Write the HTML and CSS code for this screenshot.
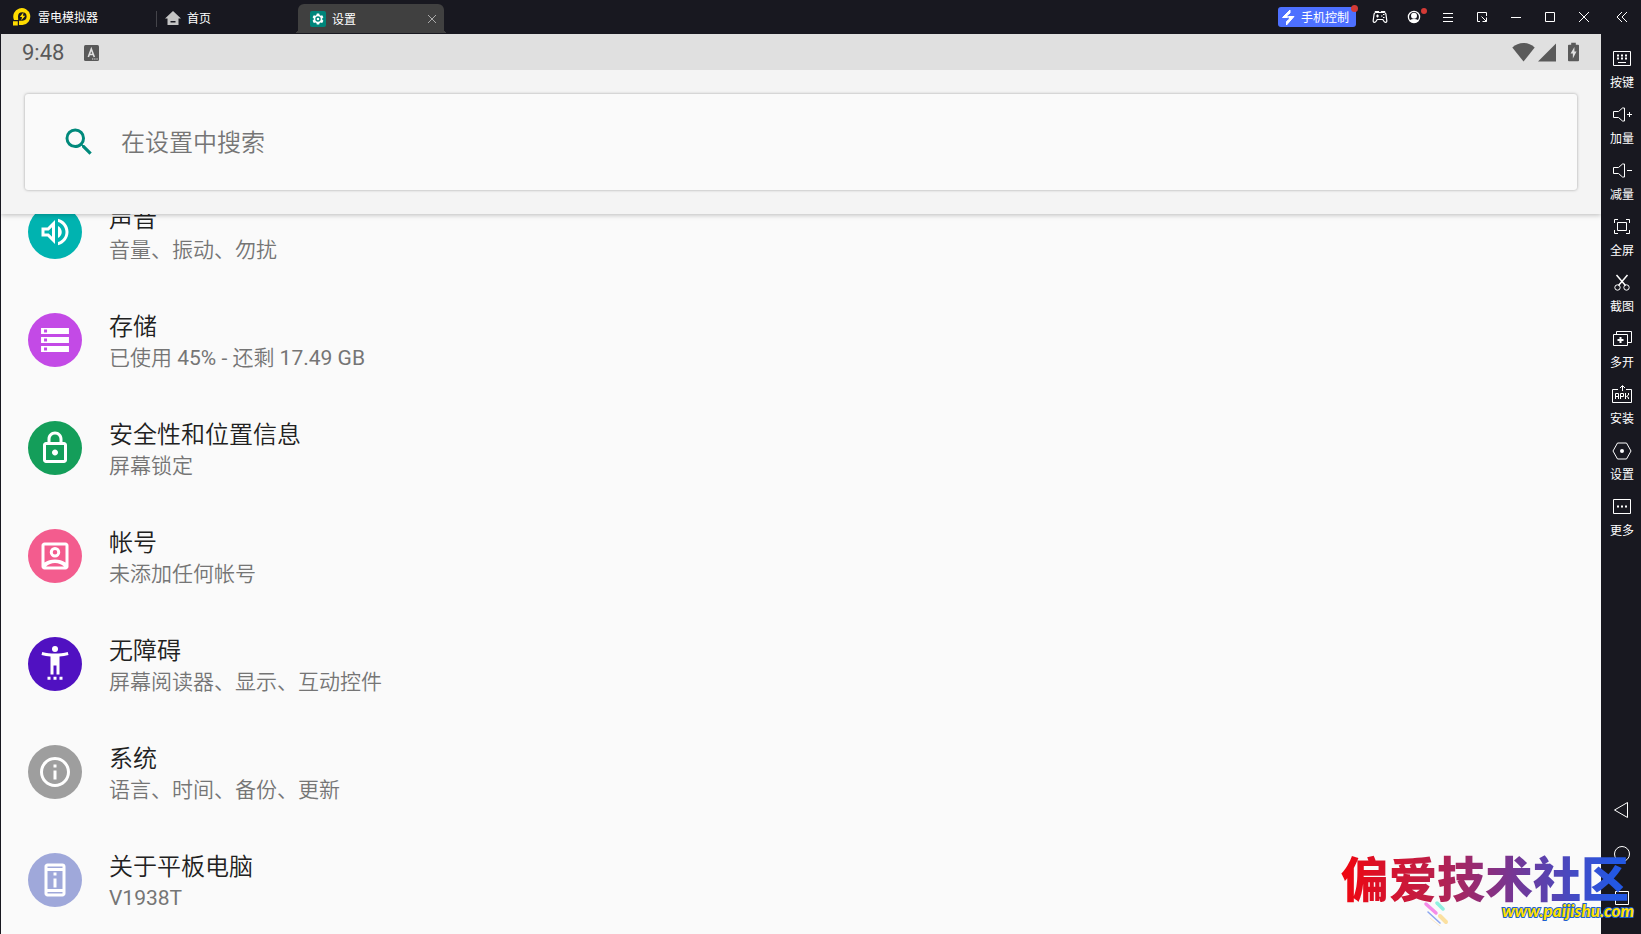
FILE: index.html
```html
<!DOCTYPE html>
<html lang="zh-CN">
<head>
<meta charset="utf-8">
<title>雷电模拟器</title>
<link rel="stylesheet" href="styles.css">
</head>
<body>
<header class="titlebar">
  <div class="brand">
    <svg class="logo" viewBox="0 0 18 18"><path d="M0 17.500V13.200H4.800V17.500ZM1 12A8.500 8.500 0 1 1 9.500 17H6V12.800H9.500A4.300 4.300 0 1 0 5 8.500L5.200 12Z" fill="#ffdc00"/><path d="M10.500 4.300 6.800 9H9l-.8 3.500L12.300 7.800H10z" fill="#ffdc00"/></svg>
    <span>雷电模拟器</span>
  </div>
  <nav class="tabs">
    <a class="tab" href="#home">
      <svg class="home-icon" viewBox="0 0 16 16"><path d="M8 1 0 8.500h2.500V15h11V8.500H16z" fill="#c4c4c4"/><path d="M5.500 11h5v1.500h-5z" fill="#181820"/></svg>
      <span>首页</span>
    </a>
    <div class="tab tab-active">
      <svg class="tab-icon" viewBox="0 0 16 16"><rect width="16" height="16" rx="2" fill="#00857a"/><path d="M6.800 2.500h2.400l.4 1.600 1 .6 1.600-.5 1.200 2.100-1.200 1.200v1.100l1.200 1.200-1.200 2.100-1.600-.5-1 .6-.4 1.600H6.800l-.4-1.600-1-.6-1.600.5-1.200-2.100 1.200-1.200V7.500L2.600 6.300l1.200-2.100 1.600.5 1-.6z" fill="#fff"/><circle cx="8" cy="8" r="2" fill="none" stroke="#00857a" stroke-width="1.400"/></svg>
      <span>设置</span>
      <button class="tab-close" aria-label="关闭标签"><svg viewBox="0 0 10 10"><path d="m1 1 8 8M9 1 1 9" stroke="#aaa" fill="none"/></svg></button>
    </div>
  </nav>
  <div class="window-actions">
    <button class="phone-btn"><svg viewBox="0 0 14 18"><path d="M9 2 1.500 9.500H6.500L6 7.500 9 5zM5.500 17 13 8.500H7.500L8.500 11 5.500 13.500z" fill="#fff" stroke="#fff" stroke-linejoin="round"/></svg><span>手机控制</span><i class="dot"></i></button>
    <button class="icon-btn" aria-label="手柄"><svg viewBox="0 0 24 24"><path d="M8 7.500h8q1.500 0 1.900 1.500l.9 6.500q.2 2-1.300 1.800-1 0-1.800-1.300l-.9-1.500H9.200L8.300 16q-.8 1.300-1.800 1.300-1.500.2-1.300-1.800L6.100 9Q6.500 7.500 8 7.500zM9.500 9.500v3M8 11h3M13 11h1.500M15 9.500h1.500M15 12.500h1.500M8 7.500 7.500 6.500h3L11 7.500M13 7.500l.5-1h3l-.5 1" fill="none" stroke="#fff" stroke-width="1.200"/></svg></button>
    <button class="icon-btn" aria-label="用户"><svg viewBox="0 0 24 24"><circle cx="12" cy="12" r="5.600" fill="none" stroke="#fff" stroke-width="1.300"/><circle cx="12" cy="10.800" r="3" fill="#fff"/><path d="M7.500 15.200q4.500-2.600 9 0-1.800 2.800-4.500 2.800t-4.500-2.800z" fill="#fff"/></svg><i class="dot"></i></button>
    <button class="icon-btn" aria-label="菜单"><svg viewBox="0 0 24 24"><path d="M7 8.500h10M7 12.500h10M7 16.500h10" stroke="#fff"/></svg></button>
    <button class="icon-btn" aria-label="缩放"><svg viewBox="0 0 24 24"><path d="M10 16.500H7.500v-9h9V11M11.500 11.500l5 5M16.500 12.500v4h-4" fill="none" stroke="#fff"/></svg></button>
    <button class="icon-btn" aria-label="最小化"><svg viewBox="0 0 24 24"><path d="M7 12.500h10" stroke="#fff"/></svg></button>
    <button class="icon-btn" aria-label="最大化"><svg viewBox="0 0 24 24"><path d="M7.500 7.500h9v9h-9z" fill="none" stroke="#fff"/></svg></button>
    <button class="icon-btn" aria-label="关闭"><svg viewBox="0 0 24 24"><path d="m7 7 10 10M17 7 7 17" stroke="#fff"/></svg></button>
    <button class="icon-btn collapse" aria-label="收起"><svg viewBox="0 0 24 24"><path d="m12 7-5 5 5 5M17 7l-5 5 5 5" fill="none" stroke="#fff"/></svg></button>
  </div>
</header>

<div class="body">
  <main class="screen">
    <div class="statusbar">
      <span class="clock">9:48</span>
      <svg class="ime" viewBox="0 0 15 16"><rect width="15" height="16" rx="1.500" fill="#595959"/><path d="m4.300 12 3-8 3 8M5.300 9.500h4" fill="none" stroke="#e0e0e0" stroke-width="1.600"/><path d="M8 14h1.300M10.200 14h1.300M12.400 14h1.300" stroke="#e0e0e0" stroke-width="1.200"/></svg>
      <div class="signals">
        <svg class="wifi" viewBox="0 0 23 20"><path d="M.3 5.500C3.500 2.500 7.300 1 11.500 1s8 1.500 11.200 4.500L11.500 19.500z" fill="#5a5a5a"/></svg>
        <svg class="cell" viewBox="0 0 18 20"><path d="M18 1.500v18H0z" fill="#5a5a5a"/></svg>
        <svg class="battery" viewBox="0 0 12 20"><path d="M3.500 0h5v2H11q1 0 1 1v16q0 1-1 1H1q-1 0-1-1V3q0-1 1-1h2.500z" fill="#5a5a5a"/><path d="M7 4.500 2.800 11.500h2.500V17l4-7.500H7z" fill="#e0e0e0"/></svg>
      </div>
    </div>
    <div class="search-area">
      <form class="search-card">
        <svg viewBox="0 0 24 24"><path d="M15.500 14h-.79l-.28-.27A6.470 6.470 0 0 0 16 9.500 6.500 6.500 0 1 0 9.500 16c1.610 0 3.090-.59 4.230-1.570l.27.28v.79l5 4.990L20.490 19l-4.990-5zm-6 0C7.010 14 5 11.990 5 9.500S7.010 5 9.500 5 14 7.010 14 9.500 11.990 14 9.500 14z" fill="#00897b"/></svg>
        <input type="search" placeholder="在设置中搜索" aria-label="在设置中搜索">
      </form>
    </div>
    <div class="list">
      <a class="row" href="#sound">
        <span class="badge teal"><svg viewBox="0 0 24 24"><path d="M3 9v6h4l5 5V4L7 9H3zm7-.17v6.340L7.830 13H5v-2h2.830L10 8.830zM16.500 12c0-1.770-1.020-3.290-2.500-4.030v8.050c1.480-.73 2.500-2.250 2.500-4.020zM14 3.230v2.060c2.890.86 5 3.540 5 6.710s-2.110 5.850-5 6.710v2.060c4.010-.91 7-4.490 7-8.770s-2.990-7.860-7-8.770z"/></svg></span>
        <span class="text"><span class="name">声音</span><span class="desc">音量、振动、勿扰</span></span>
      </a>
      <a class="row" href="#storage">
        <span class="badge purple"><svg viewBox="0 0 24 24"><path fill-rule="evenodd" d="M2.700 4h18.600v4H2.700zM4.700 5v2h2V5zM2.700 10h18.600v4H2.700zM4.700 11v2h2v-2zM2.700 16h18.600v4H2.700zM4.700 17v2h2v-2z"/></svg></span>
        <span class="text"><span class="name">存储</span><span class="desc">已使用 45% - 还剩 17.49 GB</span></span>
      </a>
      <a class="row" href="#security">
        <span class="badge green"><svg viewBox="0 0 24 24"><path d="M18 8h-1V6c0-2.760-2.240-5-5-5S7 3.240 7 6v2H6c-1.100 0-2 .9-2 2v10c0 1.100.9 2 2 2h12c1.100 0 2-.9 2-2V10c0-1.100-.9-2-2-2zM9 6c0-1.660 1.340-3 3-3s3 1.340 3 3v2H9V6zm9 14H6V10h12v10zm-6-3c1.100 0 2-.9 2-2s-.9-2-2-2-2 .9-2 2 .9 2 2 2z"/></svg></span>
        <span class="text"><span class="name">安全性和位置信息</span><span class="desc">屏幕锁定</span></span>
      </a>
      <a class="row" href="#accounts">
        <span class="badge pink"><svg viewBox="0 0 24 24"><path fill-rule="evenodd" d="M5 3h14c1.100 0 2 .9 2 2v14c0 1.100-.9 2-2 2H5c-1.100 0-2-.9-2-2V5c0-1.100.9-2 2-2zm0 2v11.300c2-1.200 4.300-1.900 7-1.900s5 .7 7 1.900V5zm1 14h12c-1.700-1.500-3.600-2.400-6-2.400S7.700 17.500 6 19zM12 6a3.500 3.500 0 1 1 0 7 3.500 3.500 0 0 1 0-7zm0 2a1.500 1.500 0 1 0 0 3 1.500 1.500 0 0 0 0-3z"/></svg></span>
        <span class="text"><span class="name">帐号</span><span class="desc">未添加任何帐号</span></span>
      </a>
      <a class="row" href="#accessibility">
        <span class="badge indigo"><svg viewBox="0 0 24 24"><circle cx="12" cy="2" r="2"/><path d="M20.500 4C17.900 4.700 14.800 5 12 5s-5.900-.3-8.500-1L3 6c1.900.5 4 .8 6 1v12h2v-6h2v6h2V7c2-.2 4.100-.5 6-1zM7 20.500h2v2H7zM11 20.500h2v2h-2zM15 20.500h2v2h-2z"/></svg></span>
        <span class="text"><span class="name">无障碍</span><span class="desc">屏幕阅读器、显示、互动控件</span></span>
      </a>
      <a class="row" href="#system">
        <span class="badge gray"><svg viewBox="0 0 24 24"><path d="M11 7h2v2h-2zm0 4h2v6h-2zm1-9C6.480 2 2 6.480 2 12s4.480 10 10 10 10-4.480 10-10S17.520 2 12 2zm0 18c-4.410 0-8-3.590-8-8s3.590-8 8-8 8 3.590 8 8-3.590 8-8 8z"/></svg></span>
        <span class="text"><span class="name">系统</span><span class="desc">语言、时间、备份、更新</span></span>
      </a>
      <a class="row" href="#about">
        <span class="badge lavender"><svg viewBox="0 0 24 24"><path d="M13 7h-2v2h2V7zm0 4h-2v6h2v-6zm4-9.990L7 1c-1.100 0-2 .9-2 2v18c0 1.100.9 2 2 2h10c1.100 0 2-.9 2-2V3c0-1.100-.9-1.990-2-1.990zM17 21H7v-1h10v1zm0-3H7V6h10v12zm0-14H7V3h10v1z"/></svg></span>
        <span class="text"><span class="name">关于平板电脑</span><span class="desc">V1938T</span></span>
      </a>
    </div>
  </main>

  <aside class="sidebar">
    <div class="tools">
      <button class="tool"><svg viewBox="0 0 24 24"><path d="M3.500 4.500h17v14h-17zM8 15.500h8"/><path d="M7 8.500h2m2 0h2m2 0h2M7 11.500h2m2 0h2m2 0h2" stroke-width="2"/></svg><span>按键</span></button>
      <button class="tool"><svg viewBox="0 0 24 24"><path d="M3.500 8.500h5l4-3.500h2v13h-2l-4-3.500h-5zM17 11.500h5M19.500 9v5"/></svg><span>加量</span></button>
      <button class="tool"><svg viewBox="0 0 24 24"><path d="M3.500 8.500h5l4-3.500h2v13h-2l-4-3.500h-5zM17 11.500h5"/></svg><span>减量</span></button>
      <button class="tool"><svg viewBox="0 0 24 24"><path d="M7.500 7.500h9v8h-9zM4.500 8V4.500H8M16 4.500h3.500V8M19.500 15v3.500H16M8 18.500H4.500V15"/></svg><span>全屏</span></button>
      <button class="tool"><svg viewBox="0 0 24 24"><path d="m6.500 4 9 10.500M17.500 4l-9 10.500" stroke-width="1.500"/><circle cx="7.500" cy="16.500" r="2.700"/><circle cx="16.500" cy="16.500" r="2.700"/></svg><span>截图</span></button>
      <button class="tool"><svg viewBox="0 0 24 24"><path d="M3.500 7.500h14v11h-14zM6.500 7V4.500h15v11H18"/><path d="M7.500 13h6M10.500 10v6" stroke-width="2"/></svg><span>多开</span></button>
      <button class="tool"><svg viewBox="0 0 24 24"><path d="M8 6.500H2.500v13h19v-13H16M12.500 8V3M10 5l2.500-2.500L15 5"/><path d="M5.500 16v-5.500h3V16m-3-2.500h3M10.500 16v-5.500h3v3h-3M15.500 10v6M18.500 10v2l-2 1.500 2 1V16"/></svg><span>安装</span></button>
      <button class="tool"><svg viewBox="0 0 24 24"><path d="M7.500 4h9l4.500 8-4.500 8h-9L3 12z"/><circle cx="12" cy="12" r="2" fill="#fff" stroke="none"/></svg><span>设置</span></button>
      <button class="tool"><svg viewBox="0 0 24 24"><path d="M3.500 4.500h17v14h-17z"/><path d="M7 11.500h2m2 0h2m2 0h2" stroke-width="2"/></svg><span>更多</span></button>
    </div>
    <div class="nav">
      <button aria-label="返回"><svg viewBox="0 0 24 24"><path d="M17.500 4.500v15L4.500 12z"/></svg></button>
      <button aria-label="主页"><svg viewBox="0 0 24 24"><circle cx="12" cy="12" r="7.500"/></svg></button>
      <button aria-label="最近任务"><svg viewBox="0 0 24 24"><path d="M5.500 5.500h13v13h-13z"/></svg></button>
    </div>
  </aside>
</div>

<div class="watermark">
  <span class="wm-name">偏爱技术社区</span>
  <svg class="wm-dashes" viewBox="0 0 26 26" fill="none" stroke-linecap="round"><path d="m3 3 10 9" stroke="#f58be8" stroke-width="3.500"/><path d="m14 2 6 6" stroke="#8ef0e0" stroke-width="3.500"/><path d="m17 15 6 6" stroke="#fbe0a0" stroke-width="4"/><path d="m5 11 12 11" stroke="#8ba6f0" stroke-width="1.500"/><path d="m7 17 10 8" stroke="#fbe9c8" stroke-width="1"/></svg>
  <span class="wm-url">www.paijishu.com</span>
</div>
</body>
</html>
```
FILE: styles.css
```css
* { box-sizing: border-box; }

body {
  margin: 0;
  height: 100vh;
  display: flex;
  flex-direction: column;
  overflow: hidden;
  background: #181820;
  color: #fff;
  font: 12px/16px "Noto Sans CJK SC", sans-serif;
}

button {
  padding: 0;
  border: 0;
  background: none;
  color: inherit;
  font: inherit;
}

a { color: inherit; text-decoration: none; }
svg { display: block; flex: none; }

.titlebar {
  flex: none;
  height: 34px;
  display: flex;
  align-items: stretch;
}

.brand {
  width: 156px;
  padding-left: 13px;
  display: flex;
  align-items: center;
  gap: 7px;
}
.logo { width: 18px; height: 18px; }

.tabs { display: flex; }
.tab {
  position: relative;
  display: flex;
  align-items: center;
  width: 142px;
  padding: 2px 0 0 9px;
  gap: 6px;
}
.tab::before {
  content: "";
  position: absolute;
  left: 0;
  top: 11px;
  height: 16px;
  border-left: 1px solid #44444a;
}
.home-icon { width: 16px; height: 16px; }
.tab-active {
  width: 146px;
  margin: 4px 0 1px;
  padding: 0 5px 0 12px;
  background: #404040;
  border-radius: 6px 6px 0 0;
}
/* Flared feet on both sides of the active tab. */
.tab-active::before {
  top: auto;
  bottom: 0;
  left: -4px;
  right: -4px;
  height: 4px;
  border: 0;
  background:
    radial-gradient(circle at 0 0, transparent 4px, #404040 4px) left / 4px 4px no-repeat,
    radial-gradient(circle at 100% 0, transparent 4px, #404040 4px) right / 4px 4px no-repeat;
}
.tab-icon { width: 16px; height: 16px; }
.tab-close { margin-left: auto; padding: 2px; }
.tab-close svg { width: 10px; height: 10px; }

.window-actions {
  margin-left: auto;
  padding-right: 7px;
  display: flex;
  align-items: center;
  gap: 10px;
}
.phone-btn {
  position: relative;
  height: 20px;
  margin-right: 2px;
  padding: 0 7px 0 3px;
  display: flex;
  align-items: center;
  gap: 6px;
  background: #4d70ff;
  border-radius: 3px;
}
.phone-btn svg { width: 14px; height: 18px; }
.icon-btn { position: relative; width: 24px; height: 24px; }
.icon-btn svg { width: 24px; height: 24px; }
.collapse { margin-left: 4px; }
.dot {
  position: absolute;
  top: -2px;
  right: -2px;
  width: 7px;
  height: 7px;
  border-radius: 50%;
  background: #d33a36;
}
.icon-btn .dot { top: 3px; right: -1px; width: 6px; height: 6px; }

.body { flex: 1; min-height: 0; display: flex; }

.screen {
  flex: 1;
  min-width: 0;
  display: flex;
  flex-direction: column;
  overflow: hidden;
  margin-left: 1px;
  background: #fafafa;
  font-family: Roboto, "Noto Sans CJK SC DemiLight", "Noto Sans CJK SC", sans-serif;
}

.statusbar {
  position: relative;
  z-index: 2;
  flex: none;
  height: 36px;
  padding: 2px 22px 0 21px;
  display: flex;
  align-items: center;
  gap: 20px;
  background: #e0e0e0;
  color: #5a5a5a;
}
.clock { font-size: 22px; line-height: 36px; }
.ime { width: 15px; height: 16px; }
.signals { margin: 0 0 2px auto; display: flex; }
.wifi { width: 23px; height: 20px; }
.cell { width: 18px; height: 20px; margin: 0 12px 0 3px; }
.battery { width: 11px; height: 20px; }

.search-area {
  position: relative;
  z-index: 1;
  flex: none;
  padding: 24px;
  background: #f4f4f4;
  box-shadow: 0 1px 5px rgba(0, 0, 0, .25);
}
.search-card {
  height: 96px;
  padding: 0 36px;
  display: flex;
  align-items: center;
  gap: 24px;
  background: #fafafa;
  border-radius: 3px;
  box-shadow: 0 0 3px rgba(0, 0, 0, .35);
}
.search-card svg { width: 36px; height: 36px; }
.search-card input {
  flex: 1;
  min-width: 0;
  padding: 2px 0 0;
  border: 0;
  outline: 0;
  background: none;
  color: #212121;
  font: 24px/36px Roboto, "Noto Sans CJK SC DemiLight", "Noto Sans CJK SC", sans-serif;
}
.search-card input::placeholder { color: #757575; opacity: 1; }

/* The list is scrolled so its first row slides under the search area. */
.list { margin-top: -36px; }
.row {
  height: 108px;
  padding: 0 27px;
  display: flex;
  align-items: center;
  gap: 27px;
}
.badge {
  width: 54px;
  height: 54px;
  display: grid;
  place-items: center;
  border-radius: 50%;
}
.badge svg { width: 36px; height: 36px; fill: #fff; overflow: visible; }
.teal { background: #00b3b0; }
.purple { background: #c34ae6; }
.green { background: #149e5a; }
.pink { background: #f35c8e; }
.indigo { background: #5011c1; }
.gray { background: #9e9e9e; }
.lavender { background: #9fa8da; }
.text { display: flex; flex-direction: column; padding-top: 3px; }
.name { color: #212121; font-size: 24px; line-height: 32px; }
.desc { color: #757575; font-size: 21px; line-height: 30px; }

.sidebar {
  flex: none;
  width: 40px;
  padding: 13px 0 24px 2px;
  display: flex;
  flex-direction: column;
  justify-content: space-between;
}
.sidebar svg { width: 24px; height: 24px; fill: none; stroke: #fff; }
.tools, .nav { display: flex; flex-direction: column; align-items: center; }
.tools { gap: 13px; }
.nav { gap: 20px; }
.tool { display: flex; flex-direction: column; align-items: center; gap: 3px; }

.watermark {
  position: absolute;
  right: 7px;
  bottom: 15px;
  z-index: 3;
  display: grid;
  justify-items: end;
  pointer-events: none;
}
.wm-name {
  background: linear-gradient(90deg, #f0060f, #c01d45 30%, #7a3590 58%, #2358e4 95%);
  background-clip: text;
  color: transparent;
  margin-right: 5px;
  padding-bottom: 3px;
  font-size: 48px;
  line-height: 48px;
  font-weight: 900;
}
.wm-dashes { position: absolute; left: 82px; bottom: -8px; width: 26px; height: 26px; }
.wm-url {
  color: #ffe000;
  font: italic 900 17px/16px Lato, sans-serif;
  -webkit-text-stroke: 2px #1b5fd0;
  paint-order: stroke fill;
}
```
